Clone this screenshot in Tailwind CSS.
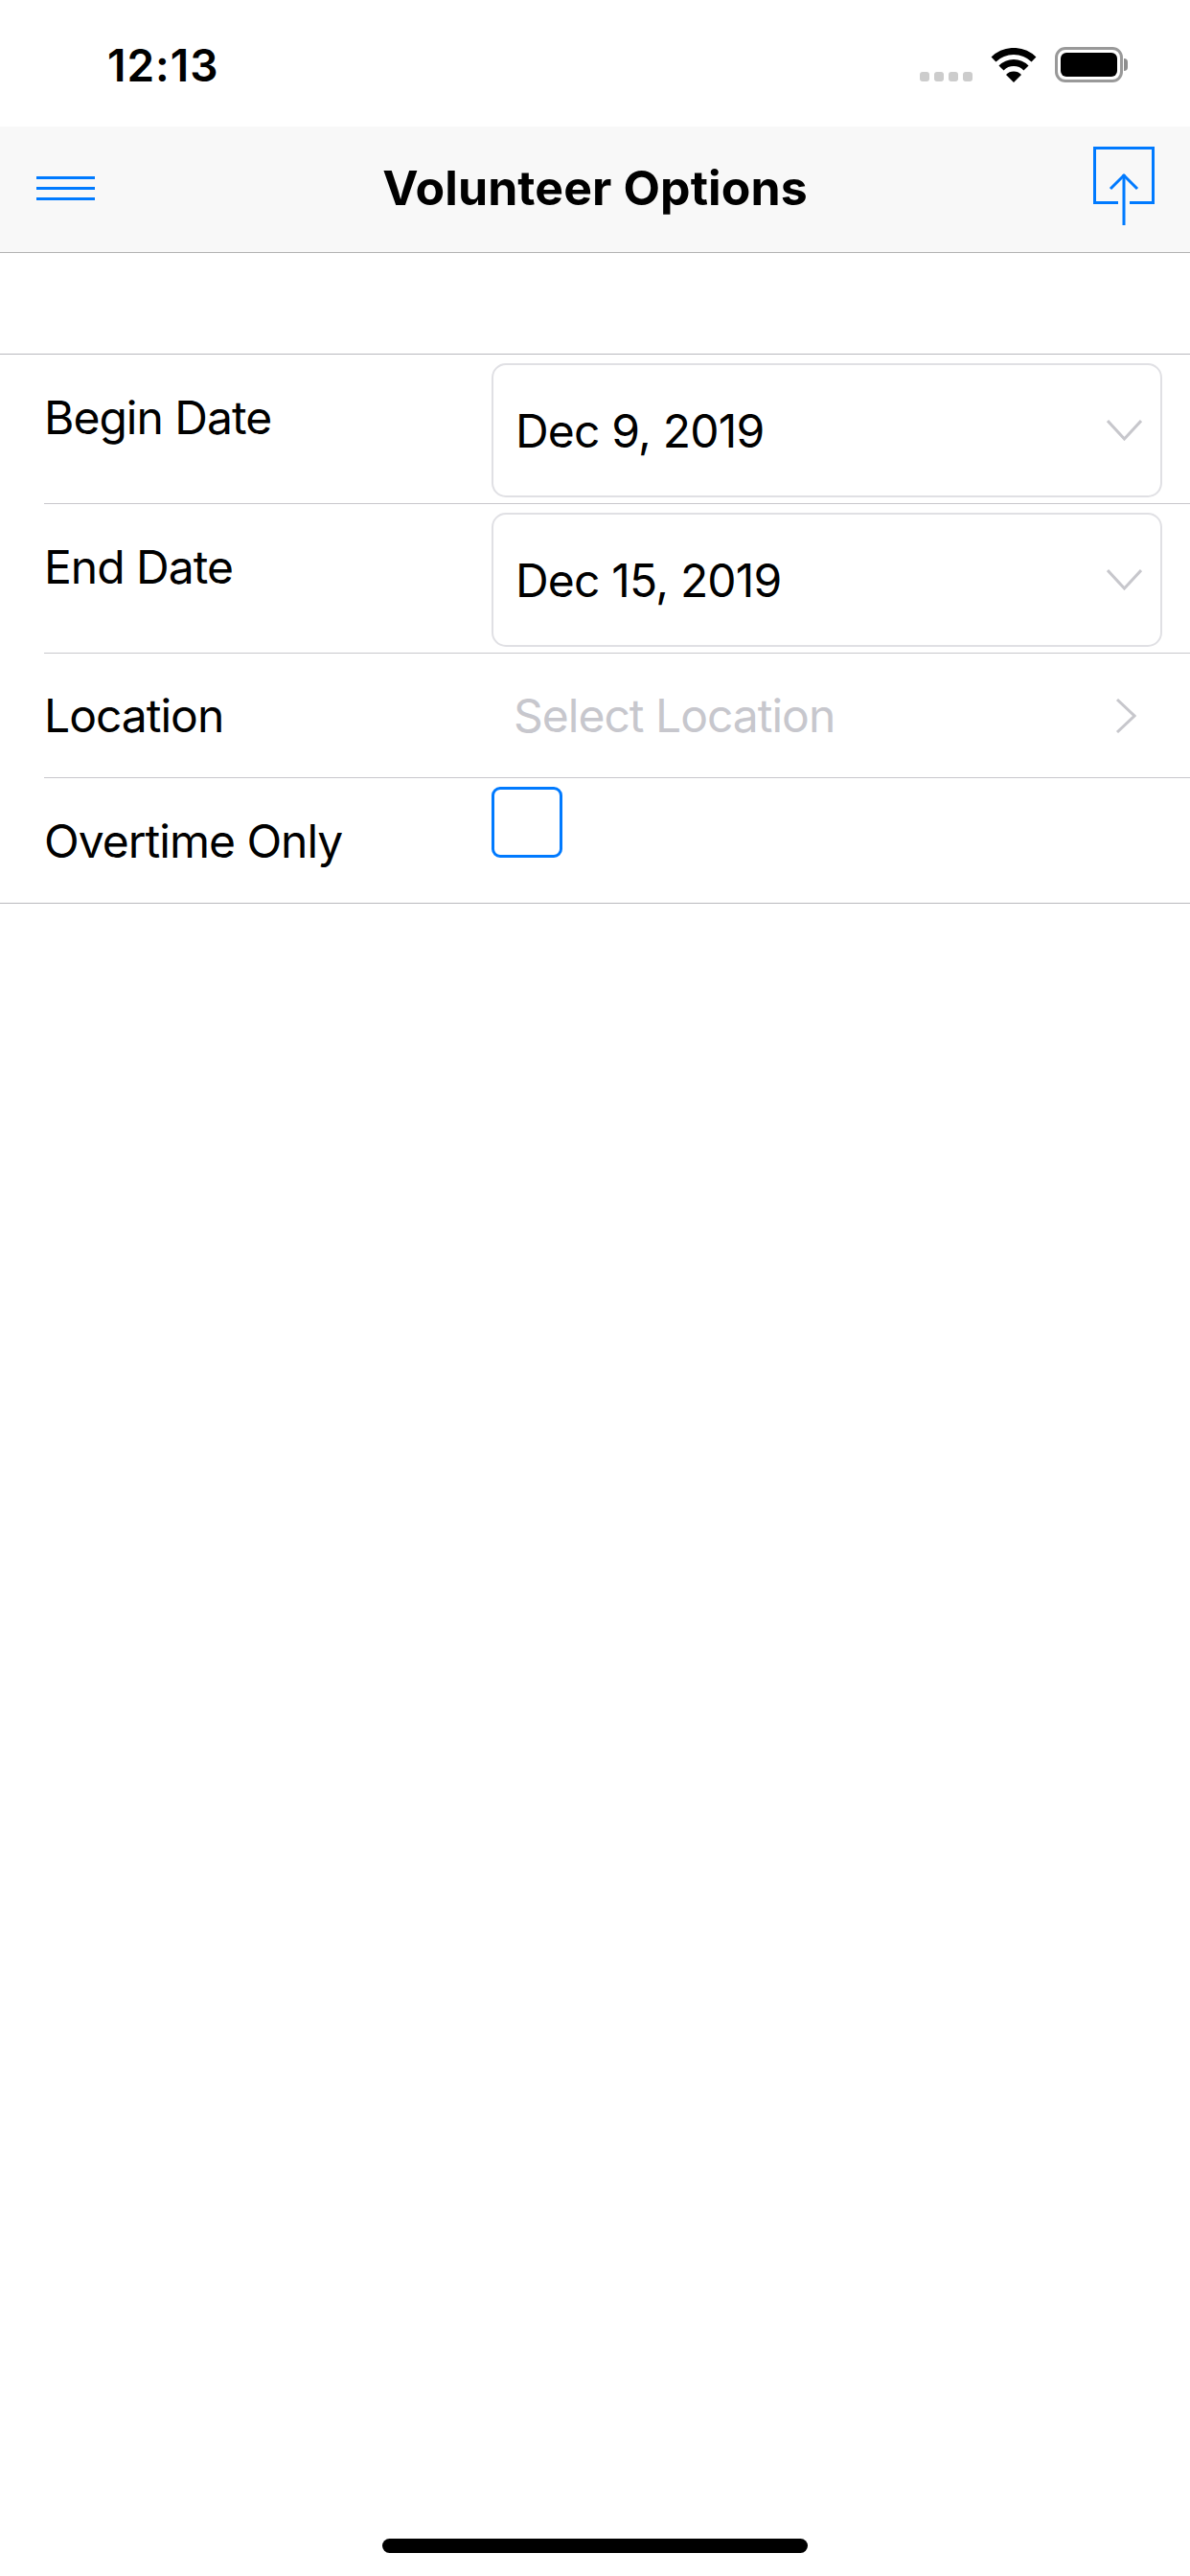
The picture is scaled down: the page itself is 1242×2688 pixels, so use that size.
<!DOCTYPE html>
<html lang="en">
<head>
    <meta charset="UTF-8">
    <meta name="viewport" content="width=device-width, initial-scale=1.0">
    <title>Volunteer Options</title>
    <script src="https://cdn.jsdelivr.net/npm/@tailwindcss/browser@4"></script>
</head>
<body class="bg-white">
    <div class="w-[1242px] h-[2688px] flex flex-col font-['Inter',sans-serif] text-black overflow-hidden">
        <!-- status bar -->
        <div class="h-[132px] flex items-start">
            <span class="ml-[112px] mt-[42px] text-[46px] leading-[52px] font-semibold tracking-[1px]">12:13</span>
            <div class="ml-auto mt-[49px] mr-[65px] flex items-end">
                <div class="flex gap-[5px] mb-[1px]">
                    <span class="w-[10px] h-[10px] rounded-[3px] bg-[#cccccc]"></span>
                    <span class="w-[10px] h-[10px] rounded-[3px] bg-[#cccccc]"></span>
                    <span class="w-[10px] h-[10px] rounded-[3px] bg-[#cccccc]"></span>
                    <span class="w-[10px] h-[10px] rounded-[3px] bg-[#cccccc]"></span>
                </div>
                <svg class="ml-[19px]" width="48" height="36" viewBox="0 0 48 36" fill="none" stroke="black" stroke-width="7">
                    <path d="M3 12 A30 30 0 0 1 45 12"/>
                    <path d="M11 21 A18 18 0 0 1 37 21"/>
                    <path d="M16 28 L24 36 L32 28 A11 11 0 0 0 16 28 Z" fill="black" stroke="none"/>
                </svg>
                <div class="ml-[19px] flex items-center">
                    <div class="w-[71px] h-[37px] rounded-[11px] border-[3px] border-[#999999] p-[3px]">
                        <div class="w-full h-full rounded-[6px] bg-black"></div>
                    </div>
                    <div class="w-[4px] h-[13px] ml-[1px] rounded-r-[4px] bg-[#8e8e8e]"></div>
                </div>
            </div>
        </div>

        <!-- nav bar -->
        <div class="h-[132px] shrink-0 flex items-start bg-[#f8f8f8] border-b border-[#b2b2b2]">
            <div class="w-[205px] pl-[38px] pt-[52px]">
                <div class="w-[61px] flex flex-col gap-[8px]">
                    <span class="h-[3px] bg-[#007aff]"></span>
                    <span class="h-[3px] bg-[#007aff]"></span>
                    <span class="h-[3px] bg-[#007aff]"></span>
                </div>
            </div>
            <h1 class="flex-1 pt-[34px] text-center text-[50px] leading-[60px] font-bold tracking-[0.1px]">Volunteer Options</h1>
            <div class="w-[205px] pr-[37px] pt-[21px] flex justify-end">
                <svg width="64" height="82" viewBox="0 0 64 82" fill="none" stroke="#007aff" stroke-width="3">
                    <path d="M26 58.500 H1.500 V1.500 H62.500 V58.500 H38"/>
                    <path d="M32 29 V82"/>
                    <path d="M18 44 L32 30 L46 44"/>
                </svg>
            </div>
        </div>

        <!-- form rows -->
        <div class="mt-[105px] border-t border-b border-[#b9b9bd] text-[48px] leading-[58px] tracking-[-1px]">
            <div class="h-[156px] ml-[46px] flex items-start border-b border-[#c8c7cc]">
                <span class="w-[467px] pt-[37px]">Begin Date</span>
                <div class="mt-[9px] w-[700px] h-[140px] flex items-center justify-between pl-[23px] pr-[19px] border-2 border-[#e0e0e4] rounded-[15px]">
                    <span class="pt-[2px] tracking-[-0.8px]">Dec 9, 2019</span>
                    <svg width="37" height="22" viewBox="0 0 37 22" fill="none" stroke="#c7c7cc" stroke-width="3">
                        <path d="M1 1 L18.500 20 L36 1"/>
                    </svg>
                </div>
            </div>
            <div class="h-[156px] ml-[46px] flex items-start border-b border-[#c8c7cc]">
                <span class="w-[467px] pt-[37px]">End Date</span>
                <div class="mt-[9px] w-[700px] h-[140px] flex items-center justify-between pl-[23px] pr-[19px] border-2 border-[#e0e0e4] rounded-[15px]">
                    <span class="pt-[2px] tracking-[-0.8px]">Dec 15, 2019</span>
                    <svg width="37" height="22" viewBox="0 0 37 22" fill="none" stroke="#c7c7cc" stroke-width="3">
                        <path d="M1 1 L18.500 20 L36 1"/>
                    </svg>
                </div>
            </div>
            <div class="h-[130px] ml-[46px] flex items-center border-b border-[#c8c7cc]">
                <span class="w-[490px]">Location</span>
                <span class="flex-1 text-[#c7c7cd]">Select Location</span>
                <svg class="mr-[56px]" width="22" height="36" viewBox="0 0 22 36" fill="none" stroke="#c7c7cc" stroke-width="3">
                    <path d="M2 1 L20 18 L2 35"/>
                </svg>
            </div>
            <div class="h-[130px] ml-[46px] flex items-start">
                <span class="w-[467px] pt-[37px]">Overtime Only</span>
                <div class="mt-[9px] w-[74px] h-[74px] rounded-[9px] border-[3px] border-[#007aff]"></div>
            </div>
        </div>

        <!-- home indicator -->
        <div class="mt-auto mb-[24px] mx-auto w-[444px] h-[15px] rounded-full bg-black"></div>
    </div>
</body>
</html>
